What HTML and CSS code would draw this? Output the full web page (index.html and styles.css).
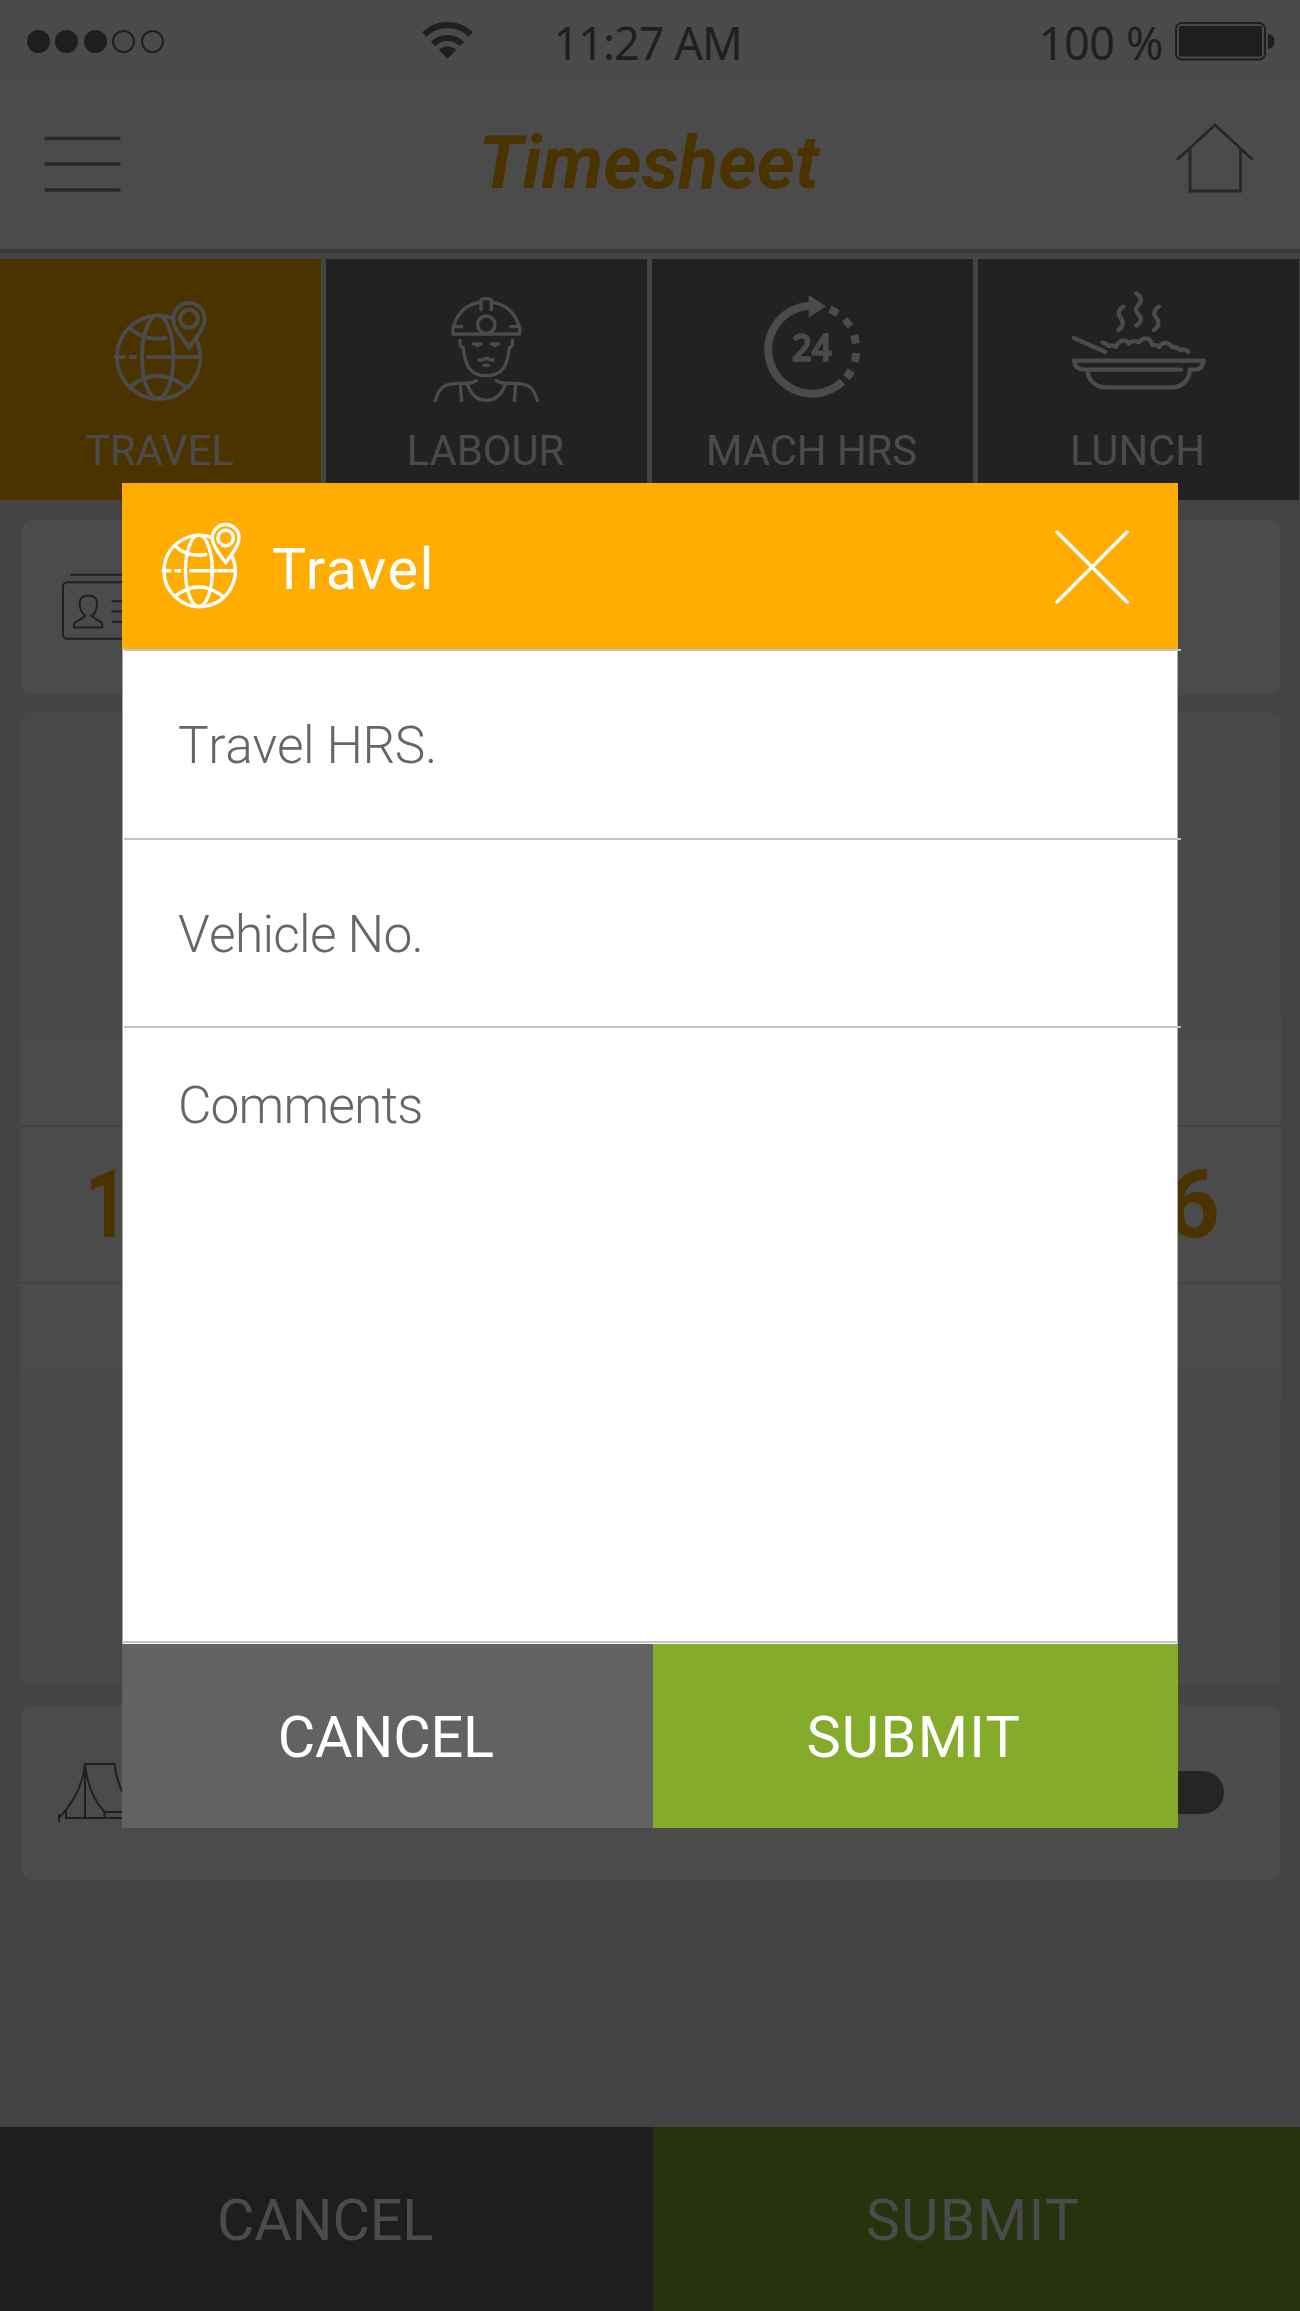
FILE: index.html
```html
<!DOCTYPE html>
<html lang="en">
<head>
<meta charset="utf-8">
<title>Timesheet</title>
<link rel="stylesheet" href="styles.css">
</head>
<body>
<svg class="defs" aria-hidden="true">
  <symbol id="globe" viewBox="340 150 285 305">
    <g fill="none" stroke="currentColor" stroke-width="12" stroke-linecap="round" stroke-linejoin="round">
      <path d="M520 204A125 125 0 1 0 592 271"/>
      <ellipse cx="475" cy="321" rx="47" ry="125"/>
      <path d="M392 235Q437 275 499 264M392 410Q475 345 558 410M350 321H374M394 321H408M446 321H600"/>
      <path d="M569 294C555 268 522 240 522 206A47 47 0 0 1 616 206C616 240 583 268 569 294Z"/>
      <circle cx="569" cy="206" r="27"/>
    </g>
  </symbol>
</svg>
<div class="screen">
  <div class="status">
    <div class="signal"><i class="on"></i><i class="on"></i><i class="on"></i><i></i><i></i></div>
    <svg class="wifi" viewBox="0 0 51 37" fill="none" stroke="currentColor">
      <path d="M2.300 12.500A33 33 0 0 1 48.700 12.500" stroke-width="6"/>
      <path d="M11 22A20.500 20.500 0 0 1 40 22" stroke-width="6"/>
      <path d="M17 28Q25.500 20.500 34 28L25.500 37Z" fill="currentColor" stroke="none"/>
    </svg>
    <span class="time">11:27 AM</span>
    <span class="charge">100 %</span>
    <svg class="battery" viewBox="0 0 101 39">
      <rect x="1" y="1" width="89" height="36.500" rx="6" fill="none" stroke="currentColor" stroke-width="2"/>
      <rect x="4" y="4" width="83" height="30.500" rx="2" fill="currentColor"/>
      <path d="M93 12Q99.500 13 99.500 19.500Q99.500 26 93 27Z" fill="currentColor"/>
    </svg>
  </div>
  <header class="header">
    <svg class="menu" viewBox="0 0 78 56" stroke="currentColor" stroke-width="3.600" stroke-linecap="round"><path d="M2 2.500H75M2 28H75M2 54H75"/></svg>
    <h1>Timesheet</h1>
    <svg class="home" viewBox="0 0 78 70" fill="none" stroke="currentColor" stroke-width="3" stroke-linecap="round"><path d="M2 36L39 2L76 36M14 27V68H64.500V27"/></svg>
  </header>
  <nav class="tabs">
    <a class="tab active">
      <svg viewBox="0 27 963 480"><use href="#globe" x="338" y="150" width="285" height="305"/></svg>
      <span>TRAVEL</span>
    </a>
    <a class="tab">
      <svg viewBox="4 27 963 480" fill="none" stroke="currentColor" stroke-width="10" stroke-linecap="round" stroke-linejoin="round">
        <path d="M385 229V252H585V229M387 228C399 188 427 163 466 157M503 157C542 163 571 188 583 228"/>
        <path d="M469 179V151Q470 146 484 146Q499 146 500 151V179M388 230H411M558 230H582"/>
        <circle cx="485" cy="224" r="26"/>
        <path d="M406 271V284Q408 291 416 293C421 345 435 377 485 377C535 377 549 345 554 293Q562 291 563 284V271"/>
        <path d="M447 282H470M500 282H522M457 287H459M510 287H512M463 330H473Q485 321 497 330H506M478 346H491"/>
        <path d="M332 452C345 402 369 401 405 400C440 400 445 398 455 392M638 452C625 402 601 401 565 400C530 400 525 398 515 392"/>
        <path d="M428 404C440 435 460 451 485 451C510 451 530 435 542 404M407 403L411 452M573 403L569 452"/>
      </svg>
      <span>LABOUR</span>
    </a>
    <a class="tab">
      <svg viewBox="20 27 963 480" fill="currentColor">
        <path d="M494 167A132 132 0 1 0 591 395" fill="none" stroke="currentColor" stroke-width="24"/>
        <path d="M490 136L542 169L490 203Z"/>
        <path d="M559 166L583 181L572 200L549 188ZM606 201L624 223L607 236L590 214ZM638 251L644 279L621 283L615 259ZM645 310L640 339L617 333L621 308ZM607 355L629 370L613 391L594 376Z"/>
        <text class="clock" x="439" y="332" textLength="120" lengthAdjust="spacingAndGlyphs">24</text>
      </svg>
      <span>MACH HRS</span>
    </a>
    <a class="tab">
      <svg viewBox="24 27 963 480" fill="none" stroke="currentColor" stroke-width="13" stroke-linecap="round" stroke-linejoin="round">
        <path d="M312 332H701Q697 359 676 359H659C659 388 638 412 606 412H407C374 412 353 388 353 361M312 332Q316 359 342 359H633"/>
        <path d="M312 264L406 306"/>
        <path d="M398 278Q410 280 416 288Q430 283 438 291Q446 272 460 272Q472 272 476 281Q488 268 507 277Q515 265 527 265Q543 267 547 285Q560 283 567 291Q576 277 590 279Q604 283 606 292Q620 290 630 300Q648 296 655 306"/>
        <path d="M460 170C442 180 444 195 452 203C462 215 460 230 445 240M499 130C517 143 515 155 505 165C495 177 497 185 505 193C517 207 515 217 499 226M567 170C549 180 551 195 559 203C569 215 567 230 552 240"/>
      </svg>
      <span>LUNCH</span>
    </a>
  </nav>
  <main class="content">
    <section class="card person">
      <svg viewBox="186 310 330 203" fill="none" stroke="currentColor" stroke-width="6" stroke-linecap="round">
        <path d="M213 315H490"/>
        <rect x="189" y="337" width="324" height="170" rx="13"/>
        <path d="M256 438C243 428 239 415 239 400Q239 377 264 377Q291 377 291 400C291 418 288 430 274 438Q287 449 300 455Q308 459 307 473H222Q221 461 227 457Q244 448 256 438ZM337 394H480M337 425H480M337 456H480"/>
      </svg>
    </section>
    <section class="card picker">
      <div class="selected"><b class="hour">1</b><b>6</b></div>
    </section>
    <section class="card camp">
      <svg viewBox="57 1760 110 64" fill="none" stroke="currentColor" stroke-width="2">
        <path d="M59 1818Q82 1794 85 1764H114.500Q118 1795 138 1812M85 1764V1818M85 1764Q88 1794 104.500 1812H160M66 1811V1818H160M104.500 1812V1818M59 1814V1822"/>
      </svg>
      <div class="toggle"><i></i></div>
    </section>
  </main>
  <footer class="actions">
    <button class="cancel">CANCEL</button>
    <button class="submit">SUBMIT</button>
  </footer>
  <div class="modal" role="dialog">
    <div class="modal-head">
      <svg class="modal-icon"><use href="#globe"/></svg>
      <h2>Travel</h2>
      <svg class="close" viewBox="0 0 74 74" stroke="currentColor" stroke-width="3.500" stroke-linecap="round"><path d="M2 2L72 72M72 2L2 72"/></svg>
    </div>
    <div class="field hours">Travel HRS.</div>
    <div class="field">Vehicle No.</div>
    <div class="field comments">Comments</div>
    <div class="modal-actions">
      <button class="cancel">CANCEL</button>
      <button class="submit">SUBMIT</button>
    </div>
  </div>
</div>
</body>
</html>
```
FILE: styles.css
```css
* { box-sizing: border-box; }
body { margin: 0; font-family: Roboto, "Liberation Sans", sans-serif; background: #444; }
svg { display: block; flex: none; }
h1, h2 { margin: 0; }
button { border: 0; padding: 3px 3px 0 0; font: 400 57.6px/1 Roboto, sans-serif; }
.cancel { letter-spacing: -.2px; }
.submit { letter-spacing: 1.300px; }
.defs { position: absolute; width: 0; height: 0; }
.screen { position: relative; width: 1300px; height: 2311px; display: flex; flex-direction: column; overflow: hidden; }

.status { height: 80px; flex: none; display: flex; align-items: flex-start; padding: 0 24px 0 27px; background: #4a4a4a; color: #1f1f1f; font: 400 45px/1 "Noto Sans", sans-serif; }
.signal { display: flex; gap: 5.400px; padding-top: 30px; }
.signal i { width: 23px; height: 23px; border: 2px solid #1f1f1f; border-radius: 50%; }
.signal .on { background: #1f1f1f; }
.wifi { width: 51px; height: 37px; margin: 22px 0 0 258px; }
.time, .charge { white-space: nowrap; padding-top: 20px; }
.time { margin-left: 81px; letter-spacing: -1px; }
.charge { margin-left: auto; letter-spacing: -.4px; }
.battery { width: 101px; height: 39px; margin: 22px 0 0 12px; }

.header { height: 173px; flex: none; display: flex; justify-content: space-between; align-items: flex-start; padding: 0 46px 0 44px; background: #4b4b4b; border-bottom: 4px solid #3a3a3a; color: #292929; }
.menu { width: 78px; height: 56px; margin-top: 56px; }
.header h1 { font: italic 700 73px/1 Roboto, sans-serif; color: #4b3300; letter-spacing: .2px; margin: 47px 0 0; }
.home { width: 78px; height: 70px; margin-top: 43px; }

.tabs { display: grid; grid-template-columns: repeat(4, 321px); gap: 5px; height: 247px; padding-top: 6px; flex: none; background: #444; }
.tab { display: flex; flex-direction: column; align-items: center; background: #222; color: #4b4b4b; font-size: 41.700px; line-height: 50px; }
.tab.active { background: #4b3300; }
.tab svg { width: 321px; height: 160px; }
.tab span { margin-top: 7px; padding-right: 2px; }
.clock { font: 600 114px "Open Sans", sans-serif; stroke: currentColor; stroke-width: 5px; stroke-linejoin: round; }

.content { flex: 1; padding: 20px 19px 0 20px; display: flex; flex-direction: column; color: #202020; }
.card { background: #4b4b4b; border-radius: 11px; flex: none; }
.person { height: 175px; margin: 0 1px; padding: 53px 0 0 41px; }
.person svg { width: 110px; height: 68px; }
.picker { height: 974px; margin-top: 17px; padding-top: 413px; background: linear-gradient(#484848, #494949 327px, #4b4b4b 327px, #4b4b4b 660px, #494949 660px, #484848); }
.selected { height: 159px; border: solid #424242; border-width: 2px 0; display: flex; justify-content: space-between; padding: 23px 61px 0; color: #4b3300; font-size: 94px; line-height: 110px; }
.hour { transform: translateX(4px) scaleX(.8); transform-origin: left; }
.camp { height: 175px; margin: 19px 1px 0; padding: 55px 56px 0 36px; display: flex; justify-content: space-between; }
.camp svg { width: 110px; height: 64px; }
.toggle { width: 112px; height: 43px; margin-top: 11px; background: #262524; border-radius: 22px; }
.toggle i { display: block; width: 70px; height: 70px; margin: -13px 0 0 -7px; border-radius: 50%; background: #3c3c3c; }

.actions { height: 184px; flex: none; display: grid; grid-template-columns: 653px 1fr; }
.actions button { color: #4b4b4b; }
.actions .cancel { background: #1e1e1e; }
.actions .submit { background: #26330d; padding-right: 7px; }

.modal { position: absolute; left: 122px; top: 483px; width: 1056px; height: 1345px; display: flex; flex-direction: column; background: #fff; box-shadow: inset 1px 0 #aaa, inset -1px 0 #aaa; }
.modal-head { height: 166px; flex: none; display: flex; align-items: flex-start; padding: 0 49px 0 38px; background: #ffad00; color: #fff; }
.modal-icon { width: 82px; height: 87px; margin-top: 39px; }
.modal h2 { font: 400 57.6px/1 Roboto, sans-serif; letter-spacing: 1.600px; margin: 58px 0 0 30px; }
.close { width: 74px; height: 74px; margin: 46.500px 0 0 auto; }
.field { height: 188.500px; width: 1057px; flex: none; margin-left: 2px; padding: 65px 0 0 54px; border-top: 2px solid #c4c4c4; color: #666; font-weight: 300; font-size: 51.500px; line-height: 60px; font-kerning: none; letter-spacing: -.750px; }
.hours { letter-spacing: -.4px; }
.comments { flex: 1; padding-top: 48px; letter-spacing: -.850px; }
.modal-actions { height: 187px; flex: none; border-top: 2px solid #c4c4c4; display: grid; grid-template-columns: 530.500px 1fr; padding-top: 1px; }
.modal-actions button { color: #fff; }
.modal-actions .cancel { background: #626262; }
.modal-actions .submit { background: #84ac2a; }
```
